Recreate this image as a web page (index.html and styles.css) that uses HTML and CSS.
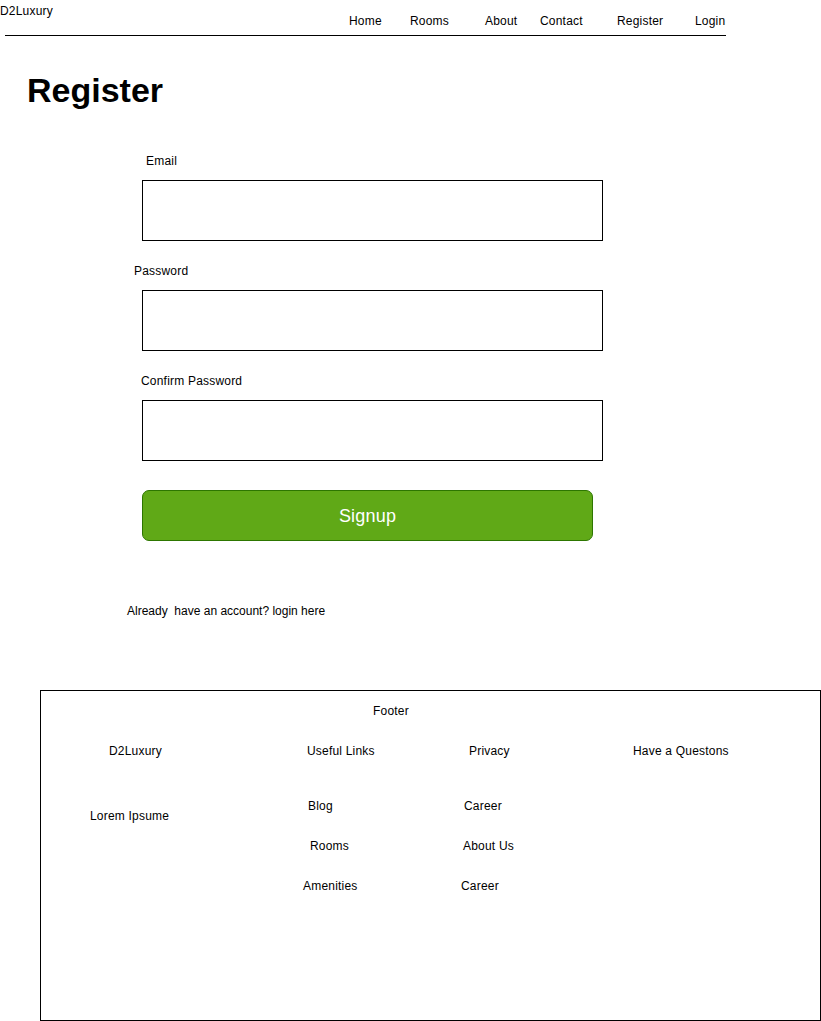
FILE: index.html
```html
<!DOCTYPE html>
<html lang="en">
<head>
<meta charset="utf-8">
<title>Register - D2Luxury</title>
<link rel="stylesheet" href="styles.css">
</head>
<body>
<header class="topbar">
  <div class="brand">D2Luxury</div>
  <nav class="nav">
    <a class="nav-link">Home</a>
    <a class="nav-link">Rooms</a>
    <a class="nav-link">About</a>
    <a class="nav-link">Contact</a>
    <a class="nav-link">Register</a>
    <a class="nav-link">Login</a>
  </nav>
</header>
<div class="rule"></div>

<main class="page">
  <h1 class="title">Register</h1>
  <form class="form">
    <label class="label label-email">Email</label>
    <input class="field" type="email">
    <label class="label label-password">Password</label>
    <input class="field" type="password">
    <label class="label label-confirm">Confirm Password</label>
    <input class="field" type="password">
    <button class="signup" type="button">Signup</button>
  </form>
  <p class="already">Already&nbsp; have an account? login here</p>
</main>

<footer class="footer">
  <div class="footer-title">Footer</div>
  <div class="footer-cols">
    <div class="fcol fcol-1">
      <div class="fitem f-brand">D2Luxury</div>
      <div class="fitem f-lorem">Lorem Ipsume</div>
    </div>
    <div class="fcol fcol-2">
      <div class="fitem f-useful">Useful Links</div>
      <div class="fitem f-blog">Blog</div>
      <div class="fitem f-rooms">Rooms</div>
      <div class="fitem f-amen">Amenities</div>
    </div>
    <div class="fcol fcol-3">
      <div class="fitem f-privacy">Privacy</div>
      <div class="fitem f-career1">Career</div>
      <div class="fitem f-about">About Us</div>
      <div class="fitem f-career2">Career</div>
    </div>
    <div class="fcol fcol-4">
      <div class="fitem f-question">Have a Questons</div>
    </div>
  </div>
</footer>
</body>
</html>
```

FILE: styles.css
```css
* { box-sizing: border-box; }

html, body {
  margin: 0;
  padding: 0;
  background: #fff;
}

body {
  width: 821px;
  font-family: "Liberation Sans", Arial, Helvetica, sans-serif;
  font-size: 12px;
  line-height: 14px;
  letter-spacing: 0.2px;
  color: #000;
}

/* Header */
.topbar {
  display: flex;
  align-items: flex-start;
  height: 35px;
}

.brand {
  flex: 0 0 349px;
  padding-top: 4px;
}

.nav {
  display: grid;
  grid-template-columns: 61px 75px 55px 77px 78px auto;
  padding-top: 14px;
}

.nav-link {
  color: #000;
  text-decoration: none;
}

.rule {
  margin-left: 5px;
  width: 721px;
  height: 1px;
  background: #000;
}

/* Main */
.page {
  display: flex;
  flex-direction: column;
}

.title {
  margin: 35px 0 0 27px;
  font-size: 34px;
  line-height: 38px;
  font-weight: bold;
  letter-spacing: 0;
}

.form {
  display: flex;
  flex-direction: column;
  align-items: flex-start;
  margin: 0 0 0 134px;
}

.label {
  display: block;
  margin-top: 23px;
}

.label-email { margin-top: 45px; margin-left: 12px; }
.label-password { margin-left: 0; }
.label-confirm { margin-left: 7px; }

.field {
  display: block;
  margin: 12px 0 0 8px;
  padding: 0;
  width: 461px;
  height: 61px;
  border: 1px solid #000;
  border-radius: 0;
  background: #fff;
  font: inherit;
  outline: none;
}

.signup {
  display: block;
  margin: 29px 0 0 8px;
  width: 451px;
  height: 51px;
  padding: 0;
  background: #60a917;
  border: 1px solid #2d7600;
  border-radius: 7px;
  color: #fff;
  font-family: inherit;
  font-size: 18px;
  line-height: 20px;
  letter-spacing: 0.2px;
}

.already {
  margin: 63px 0 0 127px;
  letter-spacing: 0;
}

/* Footer */
.footer {
  margin: 72px 0 0 40px;
  width: 781px;
  height: 331px;
  border: 1px solid #000;
  padding-top: 13px;
}

.footer-title {
  margin-left: 332px;
}

.footer-cols {
  display: flex;
  margin-top: 26px;
}

.fcol {
  display: flex;
  flex-direction: column;
  align-items: flex-start;
}

.fcol-1 { flex: 0 0 262px; }
.fcol-2 { flex: 0 0 158px; }
.fcol-3 { flex: 0 0 172px; }
.fcol-4 { flex: 1 1 auto; }

.f-brand { margin-left: 68px; }
.f-lorem { margin-left: 49px; margin-top: 51px; }

.f-useful { margin-left: 4px; }
.f-blog { margin-left: 5px; margin-top: 41px; }
.f-rooms { margin-left: 7px; margin-top: 26px; }
.f-amen { margin-left: 0; margin-top: 26px; }

.f-privacy { margin-left: 8px; }
.f-career1 { margin-left: 3px; margin-top: 41px; }
.f-about { margin-left: 2px; margin-top: 26px; }
.f-career2 { margin-left: 0; margin-top: 26px; }
```
